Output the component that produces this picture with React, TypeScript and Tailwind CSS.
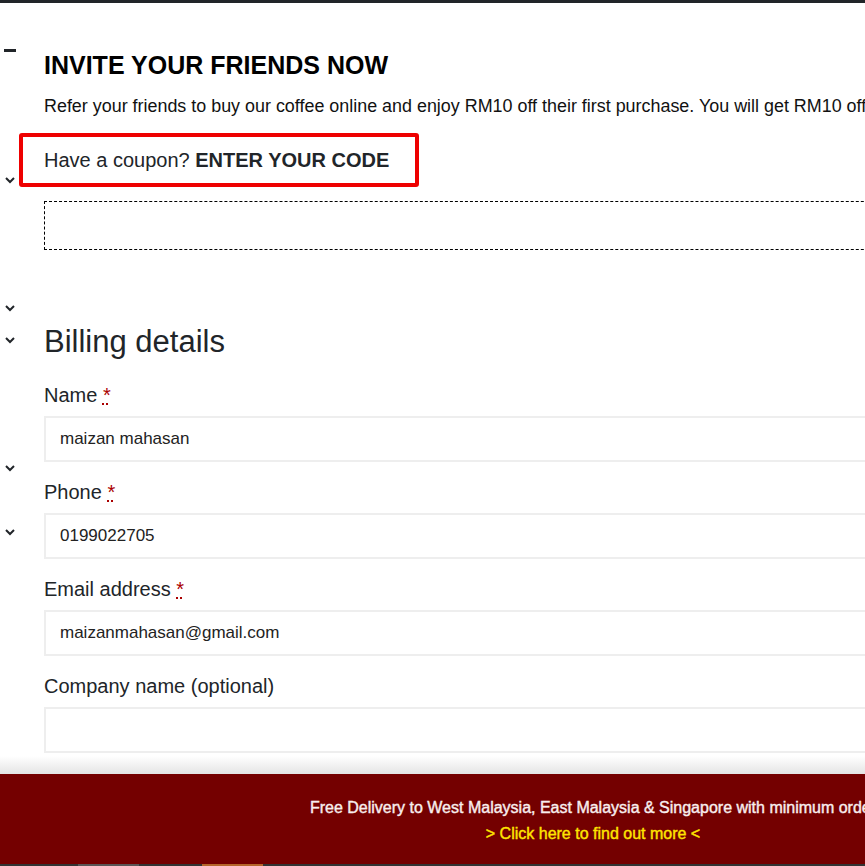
const Chevron = ({ className }: { className: string }) => (
  <svg className={className} width="12" height="8" viewBox="0 0 12 8" fill="none" stroke="#212529" strokeWidth="2">
    <path d="M2 2l4 4 4-4" />
  </svg>
);

const Field = ({ label, required, value }: { label: string; required?: boolean; value?: string }) => (
  <div className="mb-[14px]">
    <label className="block h-[30px] pt-[1px] text-[20px] leading-[30px] whitespace-nowrap text-[#212529]">
      {label}
      {required && (
        <>
          {' '}
          <span className="text-[#a00] underline decoration-dotted">*</span>
        </>
      )}
    </label>
    <div className="mt-[7px] flex h-[46px] w-[900px] items-center border-2 border-[#eeeeee] pl-[14px] text-[17px] text-[#222]">
      {value}
    </div>
  </div>
);

export default function App() {
  return (
    <div className="relative h-[866px] w-[865px] overflow-hidden bg-white font-['Liberation_Sans',Arial,sans-serif]">
      <div className="h-[3px] bg-[#212529]" />

      <div className="flex">
        {/* stray toggles down the left edge */}
        <div className="flex w-[44px] shrink-0 flex-col items-start pl-[4px]">
          <div className="mt-[46px] h-[3px] w-[12px] bg-[#212529]" />
          <Chevron className="mt-[124px]" />
          <Chevron className="mt-[120px]" />
          <Chevron className="mt-[24px]" />
          <Chevron className="mt-[120px]" />
          <Chevron className="mt-[56px]" />
        </div>

        <div className="min-w-0 flex-1">
          <h2 className="mt-[44px] text-[25px] leading-[36px] font-bold whitespace-nowrap text-black">
            INVITE YOUR FRIENDS NOW
          </h2>
          <p className="mt-[10px] text-[17.92px] leading-[27px] whitespace-nowrap text-[#111]">
            Refer your friends to buy our coffee online and enjoy RM10 off their first purchase. You will get RM10 off too!
          </p>

          <div className="mt-[13px] ml-[-25px] h-[54px] w-[400px] rounded-[3px] border-[4px] border-[#ee0000] pl-[21px] text-[20px] leading-[46px] whitespace-nowrap text-[#212529]">
            Have a coupon? <span className="font-bold">ENTER YOUR CODE</span>
          </div>

          <div className="mt-[14px] h-[49px] w-[900px] border border-dashed border-black" />

          <h2 className="mt-[73px] text-[31px] leading-[38px] whitespace-nowrap text-[#212529]">Billing details</h2>

          <div className="mt-[18px]">
            <Field label="Name" required value="maizan mahasan" />
            <Field label="Phone" required value="0199022705" />
            <Field label="Email address" required value="maizanmahasan@gmail.com" />
            <Field label="Company name (optional)" />
          </div>
        </div>
      </div>

      {/* sticky promo bar sits over the form */}
      <div className="absolute inset-x-0 bottom-0">
        <div className="h-[18px] bg-gradient-to-b from-transparent to-[#e4e4e4]" />
        <div className="h-[90px] w-[1186px] bg-[#740000] pt-[21px] text-center text-[16px] leading-[26px] [-webkit-text-stroke:0.4px]">
          <div className="whitespace-nowrap text-[#f8eeee]">
            Free Delivery to West Malaysia, East Malaysia &amp; Singapore with minimum order
          </div>
          <div className="whitespace-nowrap text-[#ffe600]">&gt; Click here to find out more &lt;</div>
        </div>
        <div className="flex h-[2px] bg-[#333]">
          <div className="ml-[78px] w-[61px] bg-[#5a5555]" />
          <div className="ml-[63px] w-[61px] bg-[#b5652a]" />
        </div>
      </div>
    </div>
  );
}
